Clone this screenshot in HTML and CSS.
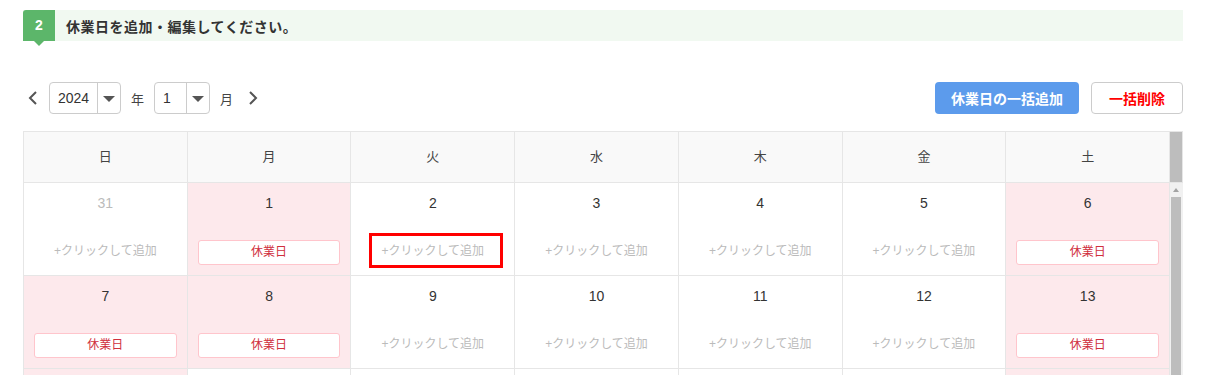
FILE: index.html
```html
<!DOCTYPE html>
<html lang="ja">
<head>
  <meta charset="UTF-8">
  <meta name="viewport" content="width=device-width, initial-scale=1">
  <title>休業日設定</title>
  <link rel="stylesheet" href="styles.css">
</head>
<body>

<div class="page">
  <div class="step">
    <span class="step-num">2</span>
    <span class="step-title">休業日を追加・編集してください。</span>
  </div>

  <div class="toolbar">
    <div class="month-nav">
      <button class="arrow-btn prev">
        <svg width="12" height="16" viewBox="0 0 12 16"><path d="M9 2 L3 8 L9 14" fill="none" stroke="#555" stroke-width="2"/></svg>
      </button>
      <div class="select year-select">
        <span class="select-value">2024</span>
        <span class="select-caret"></span>
      </div>
      <span class="unit">年</span>
      <div class="select month-select">
        <span class="select-value">1</span>
        <span class="select-caret"></span>
      </div>
      <span class="unit">月</span>
      <button class="arrow-btn next">
        <svg width="12" height="16" viewBox="0 0 12 16"><path d="M3 2 L9 8 L3 14" fill="none" stroke="#555" stroke-width="2"/></svg>
      </button>
    </div>
    <div class="actions">
      <button class="bulk-add-btn">休業日の一括追加</button>
      <button class="bulk-delete-btn">一括削除</button>
    </div>
  </div>

  <div class="calendar">
    <div class="cal-main">
      <div class="cal-head">
        <div>日</div><div>月</div><div>火</div><div>水</div><div>木</div><div>金</div><div>土</div>
      </div>
      <div class="cal-scroll">
        <div class="cal-body" id="calBody">
          <!-- days injected here -->
        </div>
      </div>
    </div>
    <div class="scrollbar">
      <div class="sb-head"></div>
      <div class="sb-track">
        <span class="sb-up"></span>
        <span class="sb-thumb"></span>
      </div>
    </div>
  </div>
</div>

<script>
  const calBody = document.getElementById('calBody');
  const days = [31, 1, 2, 3, 4, 5, 6, 7, 8, 9, 10, 11, 12, 13, 14, 15, 16, 17, 18, 19, 20];
  const holidays = [1, 6, 7, 8, 13, 14, 20];

  days.forEach((day, index) => {
    const otherMonth = index === 0;
    const isHoliday = !otherMonth && holidays.includes(day);
    let inner = `<div class="date ${otherMonth ? 'other' : ''}">${day}</div>`;
    if (isHoliday) {
      inner += '<div class="off-tag">休業日</div>';
    } else {
      inner += '<div class="add-link">+クリックして追加</div>';
    }
    if (day === 2 && !otherMonth) {
      inner += '<span class="highlight"></span>';
    }
    calBody.innerHTML += `<div class="cell ${isHoliday ? 'holiday' : ''}">${inner}</div>`;
  });
</script>

</body>
</html>
```

FILE: styles.css
```css
/* Reset */
* {
  margin: 0;
  padding: 0;
  box-sizing: border-box;
}

body {
  font-family: 'Liberation Sans', 'Noto Sans CJK JP', sans-serif;
  background-color: #fff;
  color: #333;
}

.page {
  width: 1160px;
  margin-left: 23px;
  padding-top: 10px;
}

/* Step header */
.step {
  display: flex;
  align-items: center;
  height: 31px;
  background-color: #f1f9f1;
}

.step-num {
  position: relative;
  width: 32px;
  height: 31px;
  line-height: 31px;
  text-align: center;
  background-color: #5cb66a;
  color: #fff;
  font-weight: bold;
  font-size: 14px;
  border-radius: 3px 0 0 0;
}

.step-num::after {
  content: '';
  position: absolute;
  left: 11px;
  bottom: -5px;
  border-left: 5px solid transparent;
  border-right: 5px solid transparent;
  border-top: 5px solid #5cb66a;
}

.step-title {
  margin-left: 11px;
  font-size: 14px;
  font-weight: bold;
  letter-spacing: 0.5px;
  color: #333;
}

/* Toolbar */
.toolbar {
  display: flex;
  justify-content: space-between;
  align-items: center;
  margin-top: 41px;
  margin-bottom: 17px;
  height: 32px;
}

.month-nav {
  display: flex;
  align-items: center;
}

.arrow-btn {
  background: none;
  border: none;
  width: 20px;
  height: 32px;
  display: flex;
  align-items: center;
  justify-content: center;
  cursor: pointer;
}

.arrow-btn.prev {
  margin-right: 6px;
}

.select {
  display: flex;
  height: 32px;
  border: 1px solid #ccc;
  border-radius: 4px;
  font-size: 14px;
  color: #333;
}

.year-select {
  width: 72px;
}

.month-select {
  width: 56px;
}

.select-value {
  flex: 1;
  line-height: 30px;
  padding-left: 8px;
  border-right: 1px solid #ccc;
}

.select-caret {
  width: 22px;
  position: relative;
}

.select-caret::after {
  content: '';
  position: absolute;
  left: 5px;
  top: 13px;
  border-left: 6px solid transparent;
  border-right: 6px solid transparent;
  border-top: 6px solid #555;
}

.unit {
  font-size: 13px;
  color: #444;
  padding: 0 10px;
}

.actions {
  display: flex;
  gap: 12px;
}

.bulk-add-btn {
  width: 144px;
  height: 32px;
  background-color: #5c9bec;
  color: #fff;
  font-family: inherit;
  font-size: 14px;
  font-weight: bold;
  border: none;
  border-radius: 4px;
  cursor: pointer;
}

.bulk-delete-btn {
  width: 92px;
  height: 32px;
  background-color: #fff;
  color: #f00;
  font-family: inherit;
  font-size: 14px;
  font-weight: bold;
  border: 1px solid #ccc;
  border-radius: 4px;
  cursor: pointer;
}

/* Calendar */
.calendar {
  display: flex;
}

.cal-main {
  width: 1147px;
  border-left: 1px solid #e6e6e6;
  border-top: 1px solid #e6e6e6;
}

.cal-head,
.cal-body {
  display: grid;
  grid-template-columns: repeat(7, 1fr);
}

.cal-head div {
  height: 51px;
  line-height: 50px;
  text-align: center;
  font-size: 13px;
  color: #444;
  background-color: #f9f9f9;
  border-right: 1px solid #e6e6e6;
  border-bottom: 1px solid #e6e6e6;
}

/* visible part of the scrolling body */
.cal-scroll {
  height: 193px;
  overflow: hidden;
}

.cell {
  position: relative;
  height: 93px;
  display: flex;
  flex-direction: column;
  align-items: center;
  padding: 11px 10px 10px;
  border-right: 1px solid #e6e6e6;
  border-bottom: 1px solid #e6e6e6;
}

.cell.holiday {
  background-color: #fde9ec;
}

.date {
  font-size: 14px;
  line-height: 18px;
  color: #333;
}

.date.other {
  color: #bbb;
}

.off-tag,
.add-link {
  margin-top: auto;
  width: 100%;
  height: 25px;
  line-height: 23px;
  text-align: center;
  font-size: 12px;
}

.off-tag {
  background-color: #fff;
  color: #d0303e;
  border: 1px solid #ffc5cc;
  border-radius: 3px;
}

.add-link {
  color: #bbb;
  cursor: pointer;
}

/* Annotation box */
.highlight {
  position: absolute;
  left: 18px;
  top: 50px;
  width: 134px;
  height: 35px;
  border: 3px solid #f00;
}

/* Fake scrollbar */
.scrollbar {
  width: 13px;
  display: flex;
  flex-direction: column;
}

.sb-head {
  height: 52px;
  background-color: #bdbdbd;
  border: 1px solid #e6e6e6;
  border-left: none;
}

.sb-track {
  position: relative;
  background-color: #f1f1f1;
  height: 192px;
}

.sb-up {
  position: absolute;
  left: 3px;
  top: 5px;
  border-left: 3px solid transparent;
  border-right: 3px solid transparent;
  border-bottom: 4px solid #a3a3a3;
}

.sb-thumb {
  position: absolute;
  left: 1px;
  right: 2px;
  top: 14px;
  bottom: 0;
  background-color: #bdbdbd;
}
```
